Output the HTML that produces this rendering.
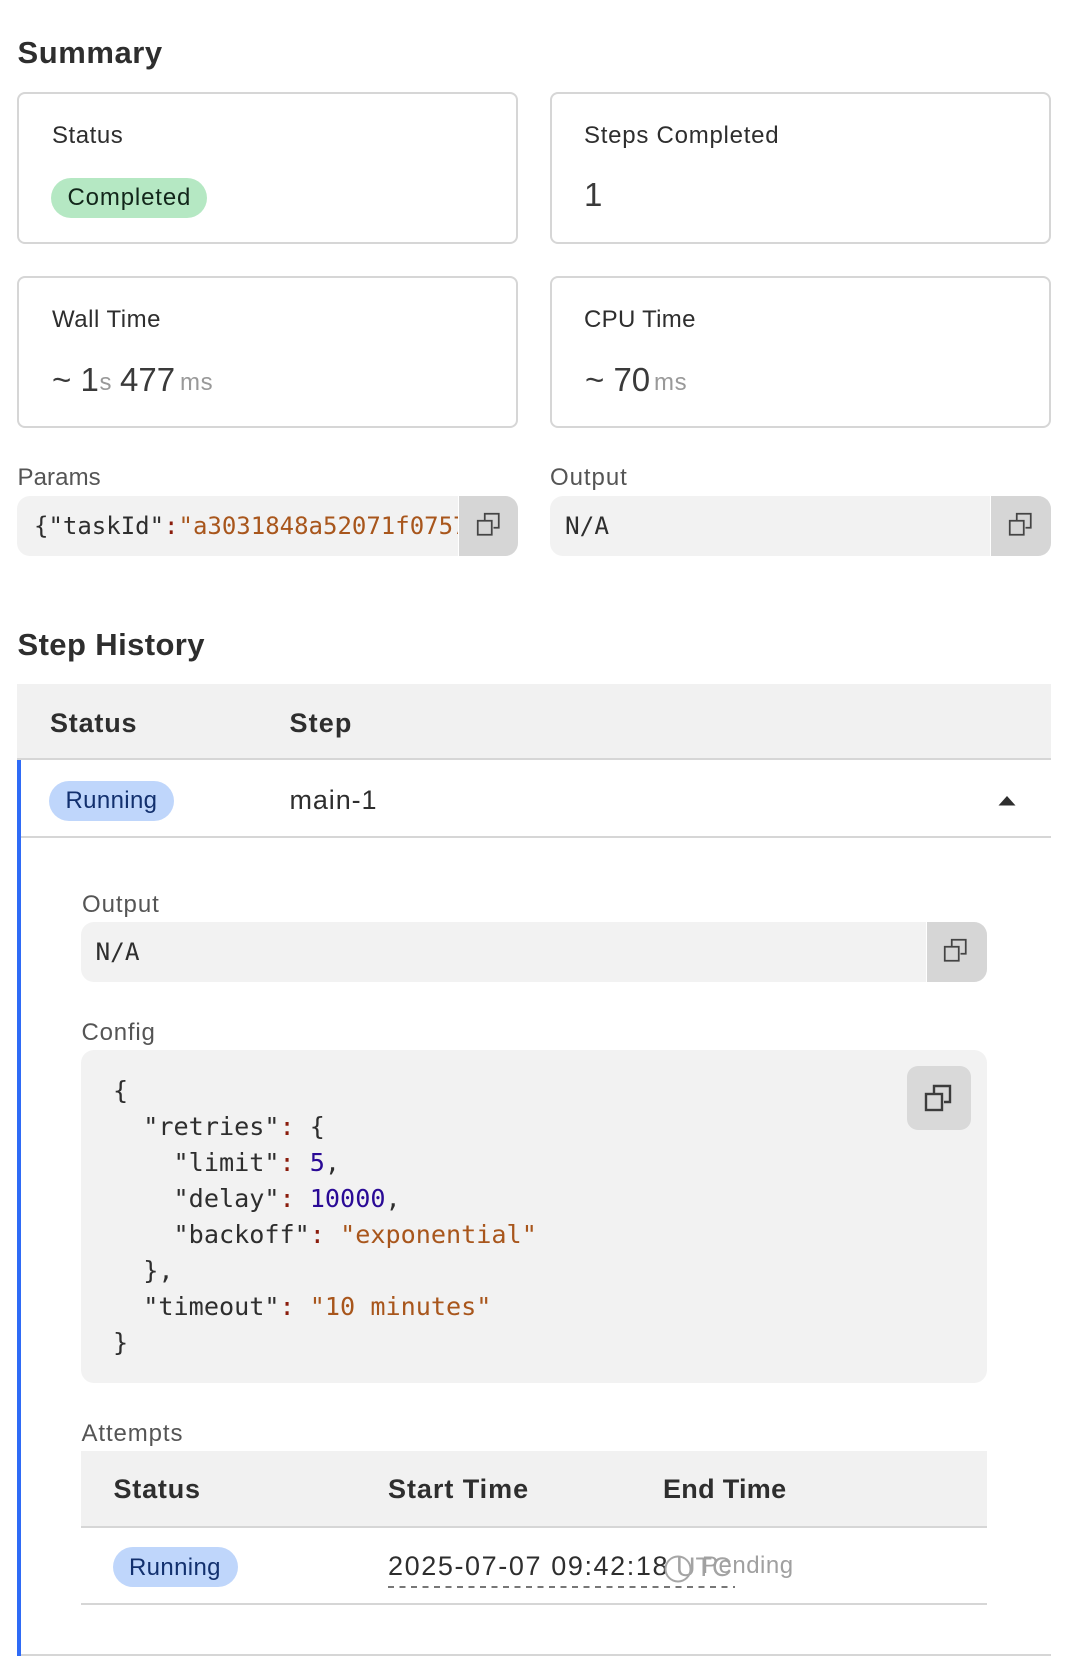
<!DOCTYPE html>
<html><head><meta charset="utf-8"><style>
html,body{margin:0;padding:0;background:#fff}
#p{position:relative;width:1078px;height:1662px;overflow:hidden;background:#fff;font-family:"Liberation Sans",sans-serif;color:#2e2e2e}
#p div,#p svg{position:absolute}
.t{white-space:pre;font-size:24px;line-height:36px;height:36px;letter-spacing:.75px}
.h{font-size:31px;font-weight:700;line-height:40px;height:40px;white-space:pre;letter-spacing:.55px}
.card{box-sizing:border-box;border:2px solid #d6d6d6;border-radius:8px;background:#fff}
.l{color:#555;white-space:pre;font-size:24px;line-height:36px;height:36px;letter-spacing:.95px}
.box{background:#f2f2f2;border-radius:13px;overflow:hidden}
.btn{background:#d6d6d6;top:0;bottom:0;border-left:1px solid #fff}
.m{font-family:"DejaVu Sans Mono",monospace;font-size:24.4px;line-height:36px;height:36px;white-space:pre;color:#2e2e2e}
.s{color:#a8561c}.n{color:#2a0a96}.c{color:#8a1c0c}
.b{font-weight:700;font-size:27px;line-height:36px;height:36px;white-space:pre;letter-spacing:.8px}
.pill{border-radius:21px;height:40px}
.g{color:#999;font-size:24px;letter-spacing:.6px}
.big{font-size:33px;letter-spacing:0;color:#3a3a3a}
</style></head><body><div id="p">
<div class="h" style="left:17.5px;top:33px">Summary</div>
<div class="card" style="left:17px;top:92px;width:501px;height:152px"></div>
<div class="card" style="left:550px;top:92px;width:501px;height:152px"></div>
<div class="card" style="left:17px;top:276px;width:501px;height:152px"></div>
<div class="card" style="left:550px;top:276px;width:501px;height:152px"></div>
<div class="t" style="left:52px;top:118px;letter-spacing:.55px">Status</div>
<div class="t" style="left:584px;top:118px">Steps Completed</div>
<div class="t" style="left:52px;top:302px;letter-spacing:.5px">Wall Time</div>
<div class="t" style="left:584px;top:302px;letter-spacing:.3px">CPU Time</div>
<div class="pill" style="left:51px;top:178px;width:156px;background:#b5e8c3"></div>
<div class="t" style="left:67.5px;top:180px;color:#12261a;letter-spacing:.85px">Completed</div>
<div class="t big" style="left:584px;top:177px">1</div>
<div class="t big" style="left:52px;top:362px">~ 1</div>
<div class="t g" style="left:99.5px;top:365px">s</div>
<div class="t big" style="left:120px;top:362px">477</div>
<div class="t g" style="left:180px;top:365px">ms</div>
<div class="t big" style="left:585px;top:362px">~ 70</div>
<div class="t g" style="left:654px;top:365px">ms</div>

<div class="l" style="left:17.5px;top:460px;letter-spacing:.1px">Params</div>
<div class="l" style="left:550px;top:460px">Output</div>
<div class="box" style="left:17px;top:496px;width:501px;height:60px">
  <div class="m" style="left:17px;top:12px;font-size:24px">{"taskId"<span class="c">:</span><span class="s">"a3031848a52071f0757</span></div>
  <div class="btn" style="right:0;width:59px"></div>
</div>
<svg style="left:476px;top:512px" width="24.5" height="24.5" viewBox="0 0 28 28" fill="none" stroke="#444" stroke-width="2"><rect x="2" y="10" width="16" height="16"/><path d="M10 10V2H26V18H20"/></svg>
<div class="box" style="left:550px;top:496px;width:501px;height:60px">
  <div class="m" style="left:15px;top:12px">N/A</div>
  <div class="btn" style="right:0;width:60px"></div>
</div>
<svg style="left:1008px;top:512px" width="24.5" height="24.5" viewBox="0 0 28 28" fill="none" stroke="#444" stroke-width="2"><rect x="2" y="10" width="16" height="16"/><path d="M10 10V2H26V18H20"/></svg>

<div class="h" style="left:17.5px;top:625px;letter-spacing:.4px">Step History</div>
<div style="left:17px;top:684px;width:1034px;height:74px;background:#f1f1f1"></div>
<div style="left:17px;top:758px;width:1034px;height:2px;background:#d6d6d6"></div>
<div class="b" style="left:50px;top:705px">Status</div>
<div class="b" style="left:289.5px;top:705px;letter-spacing:1.1px">Step</div>
<div style="left:17px;top:760px;width:4px;height:896px;background:#2f6bf6"></div>
<div class="pill" style="left:49px;top:781px;width:125px;background:#bfd6fb"></div>
<div class="t" style="left:65.5px;top:783px;color:#12306e;letter-spacing:.35px">Running</div>
<div class="t" style="left:289.5px;top:782px;font-size:27px;letter-spacing:.9px">main-1</div>
<svg style="left:998px;top:796px" width="18" height="10" viewBox="0 0 18 10"><path d="M9 0L17.5 9.5H.5Z" fill="#2e2e2e"/></svg>
<div style="left:21px;top:836px;width:1030px;height:2px;background:#d6d6d6"></div>

<div class="l" style="left:82px;top:887px">Output</div>
<div class="box" style="left:81px;top:922px;width:906px;height:60px">
  <div class="m" style="left:14.5px;top:12px">N/A</div>
  <div class="btn" style="right:0;width:60px"></div>
</div>
<svg style="left:943px;top:938px" width="24.5" height="24.5" viewBox="0 0 28 28" fill="none" stroke="#444" stroke-width="2"><rect x="2" y="10" width="16" height="16"/><path d="M10 10V2H26V18H20"/></svg>

<div class="l" style="left:81.5px;top:1015px;letter-spacing:.8px">Config</div>
<div class="box" style="left:81px;top:1050px;width:906px;height:333px"></div>
<div class="m" style="left:113px;top:1072.5px;font-size:25.15px">{
  "retries"<span class="c">:</span> {
    "limit"<span class="c">:</span> <span class="n">5</span>,
    "delay"<span class="c">:</span> <span class="n">10000</span>,
    "backoff"<span class="c">:</span> <span class="s">"exponential"</span>
  },
  "timeout"<span class="c">:</span> <span class="s">"10 minutes"</span>
}</div>
<div style="left:907px;top:1066px;width:64px;height:64px;background:#d9d9d9;border-radius:11px"></div>
<svg style="left:924px;top:1084px" width="28" height="28" viewBox="0 0 28 28" fill="none" stroke="#3c3c3c" stroke-width="2.4"><rect x="2" y="10" width="16" height="16"/><path d="M10 10V2H26V18H20"/></svg>

<div class="l" style="left:81.5px;top:1416px;letter-spacing:.9px">Attempts</div>
<div style="left:81px;top:1451px;width:906px;height:75px;background:#f1f1f1"></div>
<div style="left:81px;top:1526px;width:906px;height:2px;background:#d6d6d6"></div>
<div class="b" style="left:113.5px;top:1471px">Status</div>
<div class="b" style="left:388px;top:1471px;letter-spacing:.95px">Start Time</div>
<div class="b" style="left:663px;top:1471px;letter-spacing:.3px">End Time</div>
<div class="pill" style="left:113px;top:1547px;width:125px;background:#bfd6fb"></div>
<div class="t" style="left:129px;top:1550px;color:#12306e;letter-spacing:.35px">Running</div>
<div class="t" style="left:388px;top:1548px;font-size:27px;letter-spacing:1.6px">2025-07-07 09:42:18</div>
<div class="t" style="left:676px;top:1549px;font-size:27px;letter-spacing:0;color:#a3a3a3">UTC</div>
<div style="left:388px;top:1586px;width:347px;height:2px;background:repeating-linear-gradient(90deg,#777 0 6px,transparent 6px 11.5px)"></div>
<svg style="left:664px;top:1554px" width="28" height="30" viewBox="0 0 28 30" fill="none" stroke="#a6a6a6" stroke-width="2"><circle cx="14" cy="15" r="12.5"/></svg>
<div class="t" style="left:702px;top:1548px;color:#a0a0a0;letter-spacing:.5px">Pending</div>
<div style="left:81px;top:1603px;width:906px;height:2px;background:#d6d6d6"></div>
<div style="left:21px;top:1654px;width:1030px;height:2px;background:#d6d6d6"></div>
</div></body></html>
